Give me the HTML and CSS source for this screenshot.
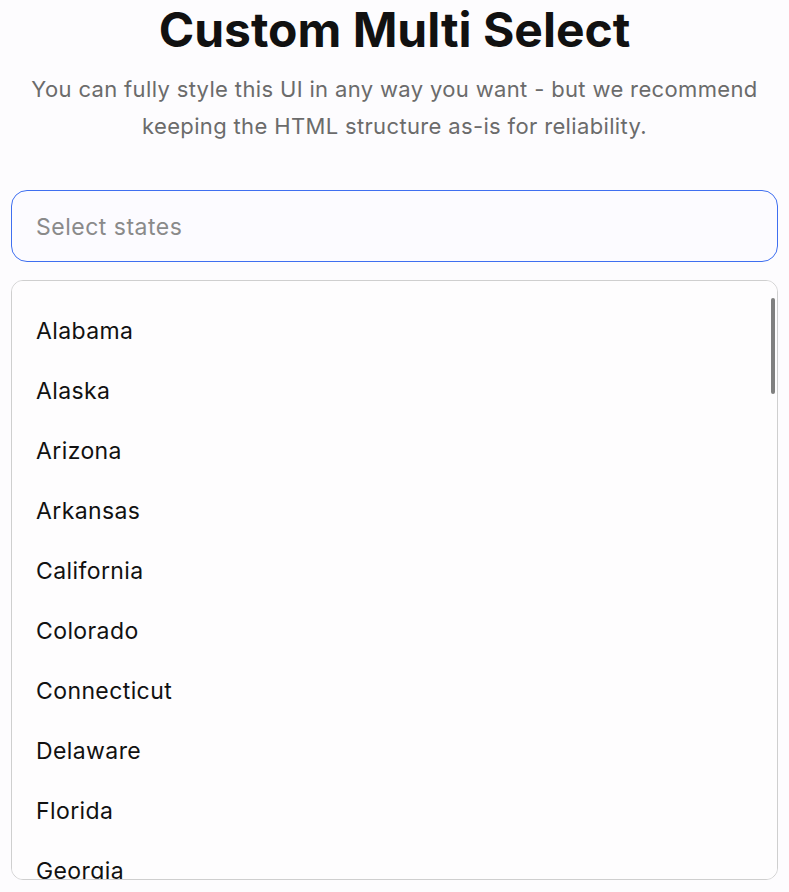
FILE: index.html
```html
<!DOCTYPE html>
<html lang="en">
<head>
    <meta charset="utf-8">
    <title>Custom Multi Select</title>
    <link rel="stylesheet" href="styles.css">
</head>
<body>
<main class="page">
    <h1 class="title">Custom Multi Select</h1>
    <p class="lead">You can fully style this UI in any way you want - but we recommend keeping the HTML structure as-is for reliability.</p>

    <div class="multi-select">
        <input class="ms-input" type="text" placeholder="Select states">
        <div class="ms-dropdown">
            <ul class="ms-list">
                <li>Alabama</li>
                <li>Alaska</li>
                <li>Arizona</li>
                <li>Arkansas</li>
                <li>California</li>
                <li>Colorado</li>
                <li>Connecticut</li>
                <li>Delaware</li>
                <li>Florida</li>
                <li>Georgia</li>
                <li>Hawaii</li>
                <li>Idaho</li>
                <li>Illinois</li>
                <li>Indiana</li>
                <li>Iowa</li>
                <li>Kansas</li>
                <li>Kentucky</li>
                <li>Louisiana</li>
                <li>Maine</li>
                <li>Maryland</li>
                <li>Massachusetts</li>
                <li>Michigan</li>
                <li>Minnesota</li>
                <li>Mississippi</li>
                <li>Missouri</li>
                <li>Montana</li>
                <li>Nebraska</li>
                <li>Nevada</li>
                <li>New Hampshire</li>
                <li>New Jersey</li>
                <li>New Mexico</li>
                <li>New York</li>
                <li>North Carolina</li>
                <li>North Dakota</li>
                <li>Ohio</li>
                <li>Oklahoma</li>
                <li>Oregon</li>
                <li>Pennsylvania</li>
                <li>Rhode Island</li>
                <li>South Carolina</li>
                <li>South Dakota</li>
                <li>Tennessee</li>
                <li>Texas</li>
                <li>Utah</li>
                <li>Vermont</li>
                <li>Virginia</li>
                <li>Washington</li>
                <li>West Virginia</li>
                <li>Wisconsin</li>
                <li>Wyoming</li>
            </ul>
            <div class="ms-thumb"></div>
        </div>
    </div>
</main>
</body>
</html>
```

FILE: styles.css
```css
html, body {
    margin: 0;
    padding: 0;
    background-color: #fdfcfe;
}
body {
    font-family: Inter, "Noto Sans", sans-serif;
    color: #111;
}
.page {
    padding: 0 11px;
}
.title {
    font-size: 48px;
    font-weight: 700;
    line-height: 58px;
    text-align: center;
    margin: 0;
    padding-top: 1px;
}
.lead {
    font-size: 22px;
    line-height: 37px;
    letter-spacing: 0.35px;
    color: #6b6b6b;
    text-align: center;
    margin: 12px 0 0;
}
.multi-select {
    margin-top: 45px;
}
.ms-input {
    display: block;
    box-sizing: border-box;
    width: 100%;
    height: 72px;
    padding: 2px 24px 0;
    border: 1px solid #3f6ff0;
    border-radius: 16px;
    background-color: #fcfbff;
    font-family: inherit;
    font-size: 23px;
    letter-spacing: 0.5px;
    color: #111;
    outline: none;
}
.ms-input::placeholder {
    color: #8a8a8a;
}
.ms-dropdown {
    position: relative;
    margin-top: 18px;
}
.ms-list {
    list-style: none;
    box-sizing: border-box;
    height: 600px;
    overflow-y: scroll;
    scrollbar-width: none;
    margin: 0;
    padding: 0;
    border: 1px solid #cfcfcf;
    border-radius: 12px;
    background-color: #fefdfe;
}
.ms-list li {
    height: 60px;
    line-height: 60px;
    padding-left: 24px;
    font-size: 23px;
    letter-spacing: 0.4px;
}
.ms-list li:first-child {
    margin-top: 20px;
}
.ms-thumb {
    position: absolute;
    top: 18px;
    right: 3px;
    width: 4px;
    height: 96px;
    border-radius: 2px;
    background-color: #808080;
}
```
